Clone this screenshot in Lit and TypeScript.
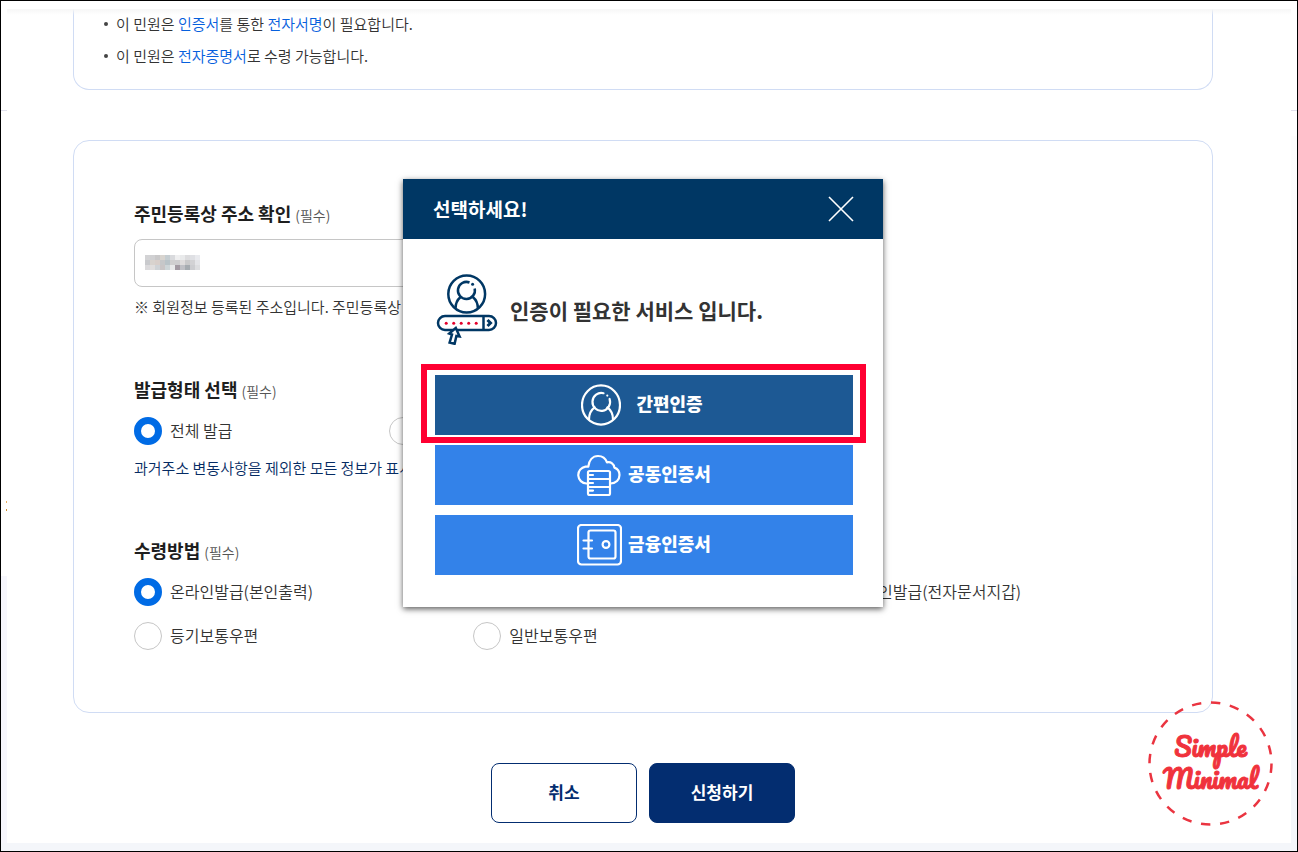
import { LitElement, html, css, svg } from "lit";
import { customElement, property, state } from "lit/decorators.js";
import { classMap } from "lit/directives/class-map.js";

type Choice = { value: string; label: string };

const ISSUE_TYPES: Choice[] = [
  { value: "full", label: "전체 발급" },
  { value: "partial", label: "선택 발급" },
];

const DELIVERY: Choice[] = [
  { value: "print", label: "온라인발급(본인출력)" },
  { value: "third", label: "온라인발급(제3자제출)" },
  { value: "wallet", label: "온라인발급(전자문서지갑)" },
  { value: "registered", label: "등기보통우편" },
  { value: "regular", label: "일반보통우편" },
];

const MOSAIC = [
  ["#d3d3d5", "#d0d0d2", "#c9c8c9", "#d8d4cf", "#c5cdd1", "#d9dadd", "#efeff0", "#e9eaeb", "#dcdcde", "#dfe0e4", "#e9eaee"],
  ["#c9cacd", "#d8d3ce", "#d8cfca", "#c6c7c9", "#b9c3c8", "#d0cfd0", "#cfced0", "#dedcdc", "#c9c9ca", "#d2d2d4", "#e4e5e8"],
  ["#dbdadc", "#e0dedd", "#cfd3d6", "#c9c5c6", "#cdd5d8", "#e9eaeb", "#a39aa3", "#bfc0c5", "#a5abb0", "#cccdd0", "#dddee0"],
];

const personIcon = svg`
  <svg class="glyph person" viewBox="0 0 40 42" aria-hidden="true">
    <ellipse cx="20" cy="21" rx="19" ry="19.6" />
    <path d="M22.5 9.2A8.8 9 0 1 0 28.6 15" />
    <circle class="dot" cx="26.3" cy="11.6" r="1.1" />
    <path d="M13.6 23.4C9.8 26.2 8 30.2 8 35.4M26.4 23.4C30.2 26.2 32 30.2 32 35.4" />
  </svg>`;

const cloudIcon = svg`
  <svg class="glyph" viewBox="0 0 45 42" aria-hidden="true">
    <path d="M11 29.5H9.5A8.5 8.5 0 0 1 8.5 12.6H11.3C12 6.5 15.5 2 21 2C25.5 2 28.7 4.7 30 8.4C34 7.5 37 10 37.4 13.6C40.5 14.7 42.5 17.6 42.5 21C42.5 25.7 39 29.3 33.5 29.5" />
    <path d="M11 18.5Q11 17 12.5 17H31.5Q33 17 33 18.5V39.5Q33 41 31.5 41H12.5Q11 41 11 39.5ZM11 25H33M11 33H33M11 21H16M11 29H16M11 36.6H16" />
  </svg>`;

const safeIcon = svg`
  <svg class="glyph" viewBox="0 0 45 42" aria-hidden="true">
    <rect x="1" y="1" width="43" height="39.5" rx="3.5" />
    <rect x="11.5" y="6.5" width="27" height="28" rx="2" />
    <circle cx="29" cy="20.5" r="3.4" />
    <path d="M6.5 16.5H15M6.5 24.5H15" />
  </svg>`;

/** Labelled set of radio buttons laid out in equal columns. */
@customElement("choice-group")
export class ChoiceGroup extends LitElement {
  @property() name = "";
  @property() legend = "";
  @property() selected = "";
  @property() hint = "";
  @property({ type: Boolean }) wide = false;
  @property({ attribute: false }) choices: Choice[] = [];

  static styles = css`
    :host { display: block; }
    fieldset { margin: 0; padding: 0; border: 0; min-width: 0; }
    legend { padding: 0; font-size: 18px; font-weight: 700; line-height: 24px; color: #1e1e1e; }
    .required { font-size: 14px; font-weight: 350; line-height: 16px; color: #555; }
    .choices { display: grid; grid-template-columns: repeat(4, 1fr); row-gap: 12px; padding-top: 14px; }
    .choices.wide { grid-template-columns: repeat(3, 1fr); }
    label { display: flex; align-items: center; gap: 8px; height: 32px; font-size: 16px; color: #333; }
    label span { padding-bottom: 2px; }
    input {
      appearance: none; box-sizing: border-box; flex: none; width: 28px; height: 28px; margin: 0;
      border: 1px solid #c6c6c6; border-radius: 50%; background: #fff;
    }
    input:checked { border: 7px solid #006be5; }
    .hint { margin: 9px 0 0; font-size: 15px; line-height: 24px; color: #052b63; }
  `;

  private pick(value: string) {
    this.selected = value;
  }

  render() {
    return html`
      <fieldset>
        <legend>${this.legend} <span class="required">(필수)</span></legend>
        <div class=${classMap({ choices: true, wide: this.wide })}>
          ${this.choices.map(
            (c) => html`<label>
              <input type="radio" name=${this.name} value=${c.value}
                .checked=${c.value === this.selected} @change=${() => this.pick(c.value)} />
              <span>${c.label}</span>
            </label>`
          )}
        </div>
        ${this.hint ? html`<p class="hint">${this.hint}</p>` : ""}
      </fieldset>
    `;
  }
}

/** Certificate selection window shown over the application form. */
@customElement("auth-dialog")
export class AuthDialog extends LitElement {
  static styles = css`
    :host { display: block; background: #fff; box-shadow: 0 2px 6px rgba(0, 0, 0, 0.65); }
    header {
      display: flex; align-items: center; justify-content: space-between; height: 60px;
      padding: 0 29px 0 30px; background: #003764; color: #fff;
    }
    h2 { margin: 0; font-size: 19px; font-weight: 700; line-height: 28px; }
    button { font: inherit; cursor: pointer; border: 0; padding: 0; }
    .close { display: flex; background: none; }
    .close svg { width: 26px; height: 26px; fill: none; stroke: #fff; stroke-width: 1.6; }
    .body { padding: 34px 30px 32px 32px; }
    .intro { display: flex; align-items: center; gap: 12px; margin: 0 0 30px; font-size: 21px; font-weight: 700; line-height: 32px; color: #333; }
    .intro span { padding-top: 2px; }
    .intro svg { width: 63px; height: 72px; fill: none; stroke: #003764; stroke-width: 2.5; flex: none; }
    .intro .dots { fill: #e4002b; stroke: none; }
    .intro .solid { fill: #003764; stroke: none; }
    .intro .cover { fill: #fff; }
    .options { display: grid; gap: 10px; margin: 0; padding: 0; list-style: none; }
    .options li { position: relative; }
    .option {
      display: flex; align-items: center; justify-content: center; gap: 6px; width: 100%; height: 60px;
      background: #3382e9; color: #fff; font-size: 18px; font-weight: 900;
    }
    .option span { padding-bottom: 4px; }
    .option.current { background: #1d5994; gap: 15px; padding-right: 4px; }
    .glyph { width: 45px; height: 42px; fill: none; stroke: #fff; stroke-width: 2.2; stroke-linecap: round; stroke-linejoin: round; }
    .glyph.person { width: 40px; }
    .glyph .dot { fill: #fff; stroke: none; }
    .marker { position: absolute; inset: -11px -13px -8px -14px; border: 6px solid #ff0032; pointer-events: none; }
  `;

  private close() {
    this.dispatchEvent(new CustomEvent("close"));
  }

  render() {
    return html`
      <header>
        <h2>선택하세요!</h2>
        <button class="close" aria-label="닫기" @click=${this.close}>
          <svg viewBox="0 0 26 26"><path d="M1 1L25 25M25 1L1 25" /></svg>
        </button>
      </header>
      <div class="body">
        <p class="intro">
          <svg viewBox="0 0 63 72" aria-hidden="true">
            <circle cx="31.7" cy="21" r="18.4" />
            <path d="M34.5 9.5A8.5 8.5 0 1 0 39.7 15.5" />
            <circle class="solid" cx="37.6" cy="11.3" r="1.5" />
            <path d="M25.6 24C22 27 20.5 31 20.5 35.5M37.8 24C41.4 27 42.9 31 42.9 35.5" />
            <rect x="3" y="43" width="58" height="14" rx="7" />
            <path d="M48.5 43V57" />
            <path d="M52.5 47L55.5 50L52.5 53" stroke-width="3" />
            <g class="dots">
              <circle cx="11.2" cy="50.3" r="1.5" /><circle cx="18.7" cy="50.3" r="1.5" />
              <circle cx="26.2" cy="50.3" r="1.5" /><circle cx="33.7" cy="50.3" r="1.5" />
              <circle cx="41.2" cy="50.3" r="1.5" />
            </g>
            <path class="cover" d="M20.8 55L14.2 60.5L17 61.6L14.6 69.6L19.6 70.8L21.4 63L24.6 63.4Z" />
          </svg>
          <span>인증이 필요한 서비스 입니다.</span>
        </p>
        <ul class="options">
          <li>
            <button class="option current">${personIcon}<span>간편인증</span></button>
            <span class="marker"></span>
          </li>
          <li><button class="option">${cloudIcon}<span>공동인증서</span></button></li>
          <li><button class="option">${safeIcon}<span>금융인증서</span></button></li>
        </ul>
      </div>
    `;
  }
}

@customElement("app-root")
export class AppRoot extends LitElement {
  @state() private dialogOpen = true;

  static styles = css`
    :host { display: block; font-family: "Noto Sans CJK KR", "Noto Sans", sans-serif; font-weight: 350; color: #333; }
    .frame {
      position: relative; box-sizing: border-box; min-height: 100vh; padding: 8px 6px; border: 1px solid #000;
      background:
        linear-gradient(#f4f6fa, #f4f6fa) bottom / 100% 8px no-repeat,
        linear-gradient(#f6f6fc, #f6f6fc) left bottom / 6px 275px no-repeat,
        linear-gradient(#f4f6fa, #f4f6fa) right bottom / 6px 275px no-repeat,
        linear-gradient(#fdfdfd, #f7f7f9) right 135px / 6px 440px no-repeat,
        linear-gradient(#e0e0ec, #e0e0ec) left 109px / 6px 1px no-repeat,
        linear-gradient(#e0e0ec, #e0e0ec) right 109px / 6px 1px no-repeat,
        linear-gradient(#eeb060, #eeb060) 5px 500px / 1px 2px no-repeat,
        linear-gradient(#d09030, #d09030) 5px 508px / 1px 2px no-repeat,
        #fff;
    }
    .page { position: relative; padding: 0 66px 20px; margin-right: 12px; }
    .top-shade { position: absolute; inset: 0 -12px auto 0; height: 6px; background: linear-gradient(#f6f6f6, rgba(255, 255, 255, 0)); }
    .card { box-sizing: border-box; border: 1px solid #d0dcf4; border-radius: 16px; }
    .notice { margin: 0; padding: 0 30px 16px; border-top: 0; border-radius: 0 0 16px 16px; list-style: none; }
    .notice li { display: flex; align-items: center; gap: 8px; padding-bottom: 2px; font-size: 15px; line-height: 30px; }
    .notice li::before { content: ""; width: 4px; height: 4px; border-radius: 50%; background: #444; }
    .notice a { color: #0660dd; text-decoration: none; }
    form { margin: 50px 0 0; }
    .form-card { display: grid; gap: 58px; padding: 60px; }
    .field { display: grid; justify-items: start; }
    .field-label { margin-bottom: 14px; font-size: 18px; font-weight: 700; line-height: 24px; color: #1e1e1e; }
    .required { font-size: 14px; font-weight: 350; line-height: 16px; color: #555; }
    .address { position: relative; width: 50%; }
    .address input { box-sizing: border-box; width: 100%; height: 48px; padding: 0 10px; border: 1px solid #c6c6c6; border-radius: 8px; background: #fff; font: inherit; display: block; }
    .mosaic { position: absolute; left: 11px; top: 16px; width: 55px; height: 15px; }
    .hint { margin: 8px 0 0; font-size: 15px; line-height: 24px; }
    .actions { display: flex; justify-content: center; gap: 12px; margin-top: 50px; }
    .actions button {
      width: 146px; height: 60px; padding: 0 0 4px; border: 1px solid #032d70; border-radius: 8px; background: #fff;
      color: #032d70; font: inherit; font-size: 17px; font-weight: 700;
    }
    .actions .submit { background: #032d70; color: #fff; }
    auth-dialog { position: absolute; top: 170px; left: 50%; width: 480px; margin-left: -240px; }
    .stamp { position: absolute; right: 24px; bottom: 25px; display: grid; place-items: center; width: 125px; height: 125px; color: #f0323c; }
    .stamp svg { grid-area: 1 / 1; width: 125px; height: 125px; fill: none; stroke: #ea3440; stroke-width: 2.5; stroke-dasharray: 9.4 9.764; }
    .stamp p { grid-area: 1 / 1; display: grid; margin: 0; padding-bottom: 4px; font-family: Pacifico, cursive; font-size: 25px; font-weight: 400; line-height: 32px; text-align: center; -webkit-text-stroke: 1px #f0323c; }
  `;

  private closeDialog() {
    this.dialogOpen = false;
  }

  render() {
    return html`
      <div class="frame">
        <main class="page">
          <div class="top-shade"></div>
          <ul class="card notice">
            <li><span>이 민원은 <a href="#">인증서</a>를 통한 <a href="#">전자서명</a>이 필요합니다.</span></li>
            <li><span>이 민원은 <a href="#">전자증명서</a>로 수령 가능합니다.</span></li>
          </ul>
          <form @submit=${(e: Event) => e.preventDefault()}>
            <div class="card form-card">
              <div class="field">
                <label class="field-label" for="address">주민등록상 주소 확인 <span class="required">(필수)</span></label>
                <div class="address">
                  <input id="address" type="text" />
                  <svg class="mosaic" viewBox="0 0 11 3" shape-rendering="crispEdges" aria-hidden="true">
                    ${MOSAIC.map((row, y) => row.map((c, x) => svg`<rect x=${x} y=${y} width="1" height="1" fill=${c} />`))}
                  </svg>
                </div>
                <p class="hint">※ 회원정보 등록된 주소입니다. 주민등록상 주소</p>
              </div>
              <choice-group name="issue" legend="발급형태 선택" selected="full" .choices=${ISSUE_TYPES}
                hint="과거주소 변동사항을 제외한 모든 정보가 표시됩니다."></choice-group>
              <choice-group name="delivery" legend="수령방법" selected="print" wide .choices=${DELIVERY}></choice-group>
            </div>
            <div class="actions">
              <button type="button">취소</button>
              <button class="submit" type="submit">신청하기</button>
            </div>
          </form>
          ${this.dialogOpen
            ? html`<auth-dialog role="dialog" aria-label="선택하세요!" @close=${this.closeDialog}></auth-dialog>`
            : ""}
        </main>
        <div class="stamp">
          <svg viewBox="0 0 125 125" aria-hidden="true"><circle cx="62.5" cy="62.5" r="61" /></svg>
          <p><span>Simple</span><span>Minimal</span></p>
        </div>
      </div>
    `;
  }
}
